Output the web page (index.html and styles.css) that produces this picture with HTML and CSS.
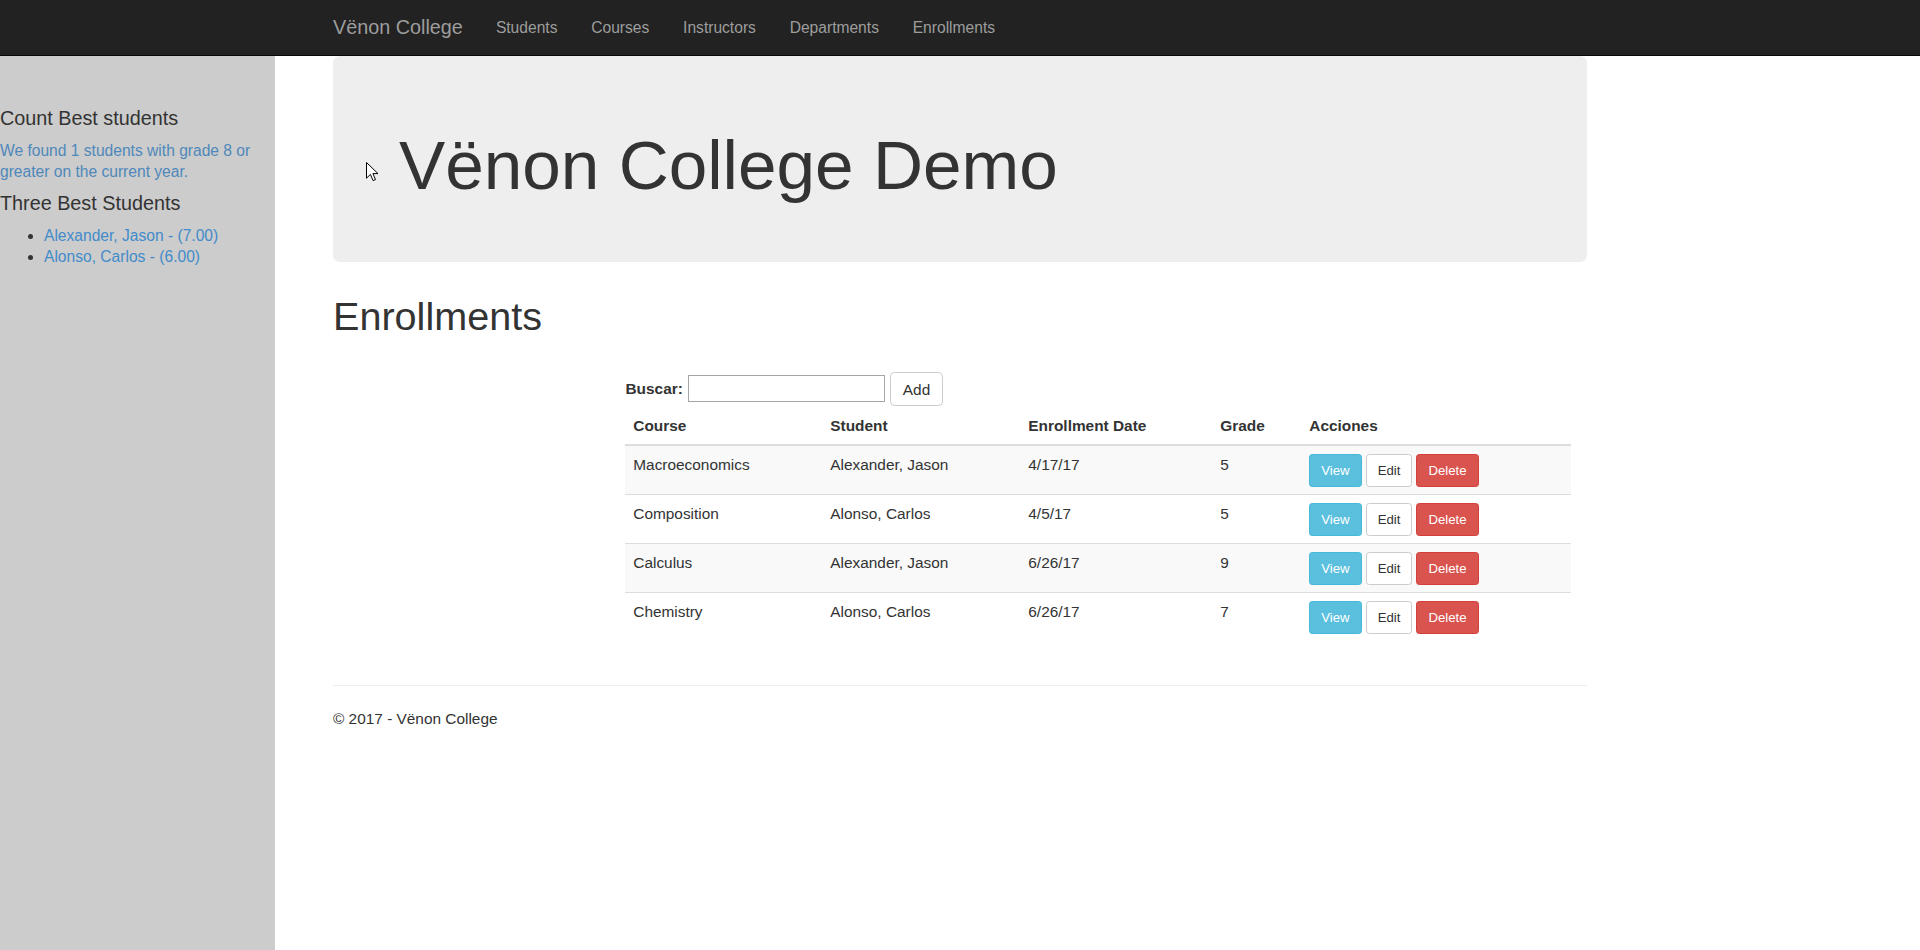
FILE: index.html
```html
<!DOCTYPE html>
<html lang="en">
<head>
<meta charset="utf-8">
<title>Enrollments - Vënon College</title>
<link rel="stylesheet" href="styles.css">
</head>
<body>
<header class="navbar">
  <div class="nav-inner">
    <a class="brand" href="#">Vënon College</a>
    <ul class="nav">
      <li><a href="#">Students</a></li>
      <li><a href="#">Courses</a></li>
      <li><a href="#">Instructors</a></li>
      <li><a href="#">Departments</a></li>
      <li><a href="#">Enrollments</a></li>
    </ul>
  </div>
</header>
<div class="layout">
  <aside class="sidebar">
    <h4>Count Best students</h4>
    <p class="info">We found 1 students with grade 8 or greater on the current year.</p>
    <h4>Three Best Students</h4>
    <ul class="best">
      <li><a href="#">Alexander, Jason - (7.00)</a></li>
      <li><a href="#">Alonso, Carlos - (6.00)</a></li>
    </ul>
  </aside>
  <main class="main">
    <div class="container">
      <div class="jumbotron">
        <svg class="cursor" width="13" height="20" viewBox="0 0 13 20"><path d="M0.5 0.5 L0.5 16.2 L4.4 12.4 L7.1 18.6 L9.5 17.6 L6.9 11.6 L12 11.6 Z" fill="#fff" stroke="#000" stroke-width="1" stroke-linejoin="round"/></svg>
        <h1>Vënon College Demo</h1>
      </div>
      <h2 class="page-title">Enrollments</h2>
      <div class="table-area">
        <div class="toolbar">
          <label class="search-label" for="q">Buscar:</label>
          <input id="q" class="search-input" type="text">
          <button class="btn btn-default">Add</button>
        </div>
        <table class="table">
          <colgroup>
            <col class="c1"><col class="c2"><col class="c3"><col class="c4"><col>
          </colgroup>
          <thead>
            <tr><th>Course</th><th>Student</th><th>Enrollment Date</th><th>Grade</th><th>Acciones</th></tr>
          </thead>
          <tbody>
            <tr class="odd"><td>Macroeconomics</td><td>Alexander, Jason</td><td>4/17/17</td><td>5</td>
              <td class="actions"><span class="btns"><button class="btn-sm btn-info">View</button><button class="btn-sm btn-plain">Edit</button><button class="btn-sm btn-danger">Delete</button></span></td></tr>
            <tr><td>Composition</td><td>Alonso, Carlos</td><td>4/5/17</td><td>5</td>
              <td class="actions"><span class="btns"><button class="btn-sm btn-info">View</button><button class="btn-sm btn-plain">Edit</button><button class="btn-sm btn-danger">Delete</button></span></td></tr>
            <tr class="odd"><td>Calculus</td><td>Alexander, Jason</td><td>6/26/17</td><td>9</td>
              <td class="actions"><span class="btns"><button class="btn-sm btn-info">View</button><button class="btn-sm btn-plain">Edit</button><button class="btn-sm btn-danger">Delete</button></span></td></tr>
            <tr><td>Chemistry</td><td>Alonso, Carlos</td><td>6/26/17</td><td>7</td>
              <td class="actions"><span class="btns"><button class="btn-sm btn-info">View</button><button class="btn-sm btn-plain">Edit</button><button class="btn-sm btn-danger">Delete</button></span></td></tr>
          </tbody>
        </table>
      </div>
      <hr class="rule">
      <footer class="footer">
        <p>© 2017 - Vënon College</p>
      </footer>
    </div>
  </main>
</div>
</body>
</html>
```
FILE: styles.css
```css
* { box-sizing: border-box; }
html, body { margin: 0; padding: 0; }
body {
  font-family: "Liberation Sans", Arial, Helvetica, sans-serif;
  font-size: 15.4px;
  line-height: 22px;
  color: #333;
  background: #fff;
  min-height: 950px;
  display: flex;
  flex-direction: column;
}
a { text-decoration: none; }

/* navbar */
.navbar {
  height: 56px;
  background: #222;
  border-bottom: 1px solid #080808;
  flex: none;
}
.nav-inner {
  width: 1254px;
  margin: 0 auto;
  display: flex;
  align-items: center;
  height: 55px;
}
.brand {
  font-size: 19.8px;
  line-height: 55px;
  color: #9d9d9d;
  padding-right: 16.5px;
}
.nav {
  list-style: none;
  margin: 0;
  padding: 0;
  display: flex;
}
.nav a {
  display: block;
  padding: 0 17.2px 0 16.6px;
  line-height: 55px;
  color: #9d9d9d;
  font-size: 15.6px;
}

/* layout */
.layout {
  flex: 1;
  display: flex;
}
.sidebar {
  width: 275px;
  flex: none;
  background: #cccccc;
  padding-top: 41px;
}
.sidebar h4 {
  font-size: 19.8px;
  line-height: 21.8px;
  font-weight: normal;
  margin: 11px 0;
  color: #333;
}
.sidebar .info {
  margin: 0 0 11px;
  font-size: 15.6px;
  line-height: 20.7px;
  color: #4f88bb;
}
.best {
  margin: 0 0 11px;
  padding-left: 44px;
  font-size: 15.6px;
  line-height: 20.7px;
}
.best a { color: #428bca; }

.main { flex: 1; }
.container {
  width: 1254px;
  margin-left: 58px;
}

/* jumbotron */
.jumbotron {
  position: relative;
  background: #eee;
  border-radius: 6.6px;
  padding: 71px 66px 59px;
}
.jumbotron h1 {
  margin: 0;
  font-size: 69.3px;
  line-height: 76.2px;
  font-weight: normal;
  color: #333;
}
.cursor {
  position: absolute;
  left: 33px;
  top: 106px;
}

.page-title {
  margin: 33px 0 11px;
  font-size: 39.6px;
  line-height: 43.6px;
  font-weight: normal;
  color: #333;
}

/* table area */
.table-area {
  margin-left: 291.5px;
  width: 946.5px;
  padding-top: 21px;
}
.toolbar {
  display: flex;
  align-items: center;
  height: 34px;
  padding-top: 2px;
}
.search-label {
  font-weight: bold;
  margin-right: 5px;
  padding-left: 1px;
}
.search-input {
  width: 197px;
  height: 27px;
  border: 1px solid #a6a6a6;
  padding: 1px 2px;
  margin: 0 5px 0 0;
  font-family: inherit;
  font-size: 13.3px;
}
.btn {
  font-family: inherit;
  cursor: pointer;
}
.btn-default {
  height: 34px;
  padding: 2px 12px 0;
  font-size: 15.4px;
  color: #333;
  background: #fff;
  border: 1px solid #ccc;
  border-radius: 4.4px;
}

.table {
  width: 100%;
  border-collapse: collapse;
  table-layout: fixed;
}
.c1 { width: 197px; }
.c2 { width: 198px; }
.c3 { width: 192px; }
.c4 { width: 89px; }
.table th {
  text-align: left;
  font-weight: bold;
  padding: 10.5px 8.8px 6.5px;
  line-height: 22px;
  border-bottom: 2px solid #ddd;
  vertical-align: bottom;
}
.table td {
  height: 49px;
  padding: 8.5px 8.8px 7px;
  line-height: 22px;
  vertical-align: top;
  border-top: 1px solid #ddd;
}
.table tbody tr:first-child td { border-top: 0; height: 48px; }
.table tr.odd td { background: #f9f9f9; }
.btns {
  display: flex;
  gap: 4px;
}
.btn-sm {
  font-family: inherit;
  font-size: 13.2px;
  line-height: 19.8px;
  height: 32.5px;
  padding: 5.5px 11px;
  border: 1px solid transparent;
  border-radius: 3.3px;
  cursor: pointer;
}
.btn-info { background: #5bc0de; border-color: #46b8da; color: #fff; }
.btn-plain { background: #fff; border-color: #ccc; color: #333; }
.btn-danger { background: #d9534f; border-color: #d43f3a; color: #fff; }

.rule {
  border: 0;
  border-top: 1px solid #eee;
  margin: 44px 0 22px;
}
.footer p { margin: 0; }
```
